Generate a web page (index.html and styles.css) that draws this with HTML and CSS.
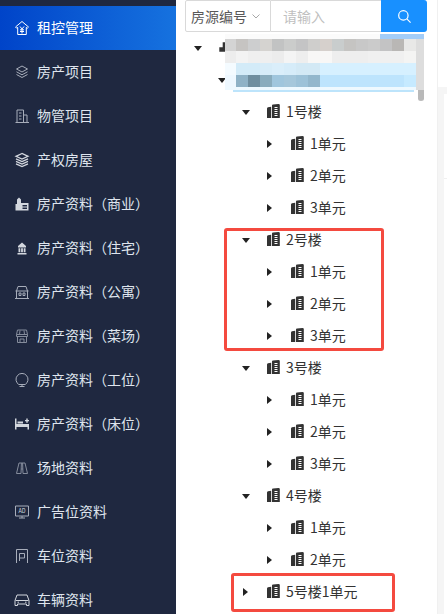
FILE: index.html
```html
<!DOCTYPE html>
<html>
<head>
    <title>租控管理</title>
    <link rel="stylesheet" href="styles.css">
</head>
<body>
    <svg class="sprite" width="0" height="0">
        <symbol id="bld" viewBox="0 0 13 14">
            <path d="M0 4.500Q0 3.500 1 3.300L4.200 2.700V14H0zM5 1.500Q5 .8 6 .600L11.500 0Q12.800 0 12.800 1V14H5zM7.500 3v.9h3V3zM7.500 5v.9h3V5zM7.500 7v.9h3V7zM7.500 9v.9h3V9zM7.500 11v.9h3v-.9z" fill-rule="evenodd"/>
        </symbol>
        <symbol id="org" viewBox="0 0 13 14">
            <path d="M3.700 2.300H6v5H3.700zM.3 7.300H6v4.400H.3z"/>
        </symbol>
    </svg>

    <div class="sidebar">
        <div class="menu-item active">
            <svg class="menu-icon" viewBox="0 0 16 16"><path d="M8 1.500 1.500 7l1.200 1.200 1-.8V14.500h8.600V7.400l1 .8L14.500 7zM6 6.500 8 9l2-2.500M8 9v4.500M6 9.800h4M6 11.500h4"/></svg>
            <span>租控管理</span>
        </div>
        <div class="menu-item">
            <svg class="menu-icon" viewBox="0 0 16 16"><path d="M8 2 2.500 5 8 8l5.500-3zM2.500 7.800 8 10.800l5.500-3M2.500 10.500 8 13.500l5.500-3"/></svg>
            <span>房产项目</span>
        </div>
        <div class="menu-item">
            <svg class="menu-icon" viewBox="0 0 16 16"><path d="M3 14.500V2h6.500v12.500M9.500 7H13v7.500M1.500 14.500h13.500M5 5h2.500M5 8h2.500M5 11h2.500"/></svg>
            <span>物管项目</span>
        </div>
        <div class="menu-item">
            <svg class="menu-icon thick" viewBox="0 0 16 16"><path d="M8 1.500 2 4.300l6 2.800 6-2.800zM2 6.800l6 2.800 6-2.800M2 9.300l6 2.800 6-2.800M2 11.800l6 2.800 6-2.800"/></svg>
            <span>产权房屋</span>
        </div>
        <div class="menu-item">
            <svg class="menu-icon solid" viewBox="0 0 16 16"><path d="M3 8V3.500L5 1.500l2 2V7h7.500v7.500H1.500V8zM8.500 9v1.500h4.500V9zM8.500 11.500V13h4.500v-1.500z" fill-rule="evenodd"/></svg>
            <span>房产资料（商业）</span>
        </div>
        <div class="menu-item">
            <svg class="menu-icon solid" viewBox="0 0 16 16"><path d="M8 2.500 12 6v1.500H4V6zM4.500 8.300h1.800v4H4.500zM7.100 8.300h1.800v4H7.100zM9.700 8.300h1.800v4H9.700zM3.500 13h9v1.500h-9z"/></svg>
            <span>房产资料（住宅）</span>
        </div>
        <div class="menu-item">
            <svg class="menu-icon" viewBox="0 0 16 16"><path d="M2.500 7 4 2.500h8L13.500 7M1.500 7h13M2.500 7v7.500h11V7M5 9h2v2.500H5zM9 9h2v2.500H9zM1 14.500h14"/></svg>
            <span>房产资料（公寓）</span>
        </div>
        <div class="menu-item">
            <svg class="menu-icon dim" viewBox="0 0 16 16"><path d="M3.500 2h9l1 4.500h-11zM2.500 6.500v2h11v-2M3.500 8.500v6h9v-6M6 14.500V11h4v3.500M6 2.500l-.5 4M10 2.500l.5 4"/></svg>
            <span>房产资料（菜场）</span>
        </div>
        <div class="menu-item">
            <svg class="menu-icon" viewBox="0 0 16 16"><path d="M4.800 12.500A6 6 0 1 1 11.200 12.500zM8 12.500v2M5.500 14.500h5"/></svg>
            <span>房产资料（工位）</span>
        </div>
        <div class="menu-item">
            <svg class="menu-icon solid" viewBox="0 0 16 16"><path d="M1 2.500h1.500V8H15v5.500h-1.500V11h-11v2.500H1zM3.500 5.500H9V7.500H3.500zM11 4h1.300V2.500h1.400V4H15v1.300h-1.300v1.400h-1.400V5.300H11z"/></svg>
            <span>房产资料（床位）</span>
        </div>
        <div class="menu-item">
            <svg class="menu-icon dim" viewBox="0 0 16 16"><path d="M5 3h6l2.500 10.500H9L8.800 9H7.200L7 13.500H2.500zM7.400 3 7.200 9M8.600 3l.2 6"/></svg>
            <span>场地资料</span>
        </div>
        <div class="menu-item">
            <svg class="menu-icon" viewBox="0 0 16 16"><path d="M1.500 2h13v10h-13zM5 14h6M8 12v2"/><text x="8" y="9.300" class="ad-text">AD</text></svg>
            <span>广告位资料</span>
        </div>
        <div class="menu-item">
            <svg class="menu-icon" viewBox="0 0 16 16"><path d="M2.500 15V1.500h11V15M5.500 13V5.500h5v4.500h-5"/></svg>
            <span>车位资料</span>
        </div>
        <div class="menu-item">
            <svg class="menu-icon bright" viewBox="0 0 16 16"><path d="M1 8.500 3 3h10l2 5.500v5h-2.500V12h-9v1.500H1zM1.500 8.500h13M3.500 10.200h1.500M11 10.200h1.500"/></svg>
            <span>车辆资料</span>
        </div>
    </div>

    <div class="content">
        <div class="search-bar">
            <div class="search-select">
                <span>房源编号</span>
                <svg class="chevron" viewBox="0 0 8 5"><path d="M.5.500 4 4 7.500.500"/></svg>
            </div>
            <div class="search-input">请输入</div>
            <div class="search-btn">
                <svg viewBox="0 0 16 16"><circle cx="6.800" cy="6.800" r="5"/><path d="m10.500 10.500 4 4"/></svg>
            </div>
        </div>

        <div class="tree">
            <div class="node"><i class="switch open"></i><svg class="bld"><use href="#org"/></svg></div>
            <div class="node l1"><i class="switch open"></i></div>
            <div class="node l2"><i class="switch open"></i><svg class="bld"><use href="#bld"/></svg><span>1号楼</span></div>
            <div class="node l3"><i class="switch"></i><svg class="bld"><use href="#bld"/></svg><span>1单元</span></div>
            <div class="node l3"><i class="switch"></i><svg class="bld"><use href="#bld"/></svg><span>2单元</span></div>
            <div class="node l3"><i class="switch"></i><svg class="bld"><use href="#bld"/></svg><span>3单元</span></div>
            <div class="node l2"><i class="switch open"></i><svg class="bld"><use href="#bld"/></svg><span>2号楼</span></div>
            <div class="node l3"><i class="switch"></i><svg class="bld"><use href="#bld"/></svg><span>1单元</span></div>
            <div class="node l3"><i class="switch"></i><svg class="bld"><use href="#bld"/></svg><span>2单元</span></div>
            <div class="node l3"><i class="switch"></i><svg class="bld"><use href="#bld"/></svg><span>3单元</span></div>
            <div class="node l2"><i class="switch open"></i><svg class="bld"><use href="#bld"/></svg><span>3号楼</span></div>
            <div class="node l3"><i class="switch"></i><svg class="bld"><use href="#bld"/></svg><span>1单元</span></div>
            <div class="node l3"><i class="switch"></i><svg class="bld"><use href="#bld"/></svg><span>2单元</span></div>
            <div class="node l3"><i class="switch"></i><svg class="bld"><use href="#bld"/></svg><span>3单元</span></div>
            <div class="node l2"><i class="switch open"></i><svg class="bld"><use href="#bld"/></svg><span>4号楼</span></div>
            <div class="node l3"><i class="switch"></i><svg class="bld"><use href="#bld"/></svg><span>1单元</span></div>
            <div class="node l3"><i class="switch"></i><svg class="bld"><use href="#bld"/></svg><span>2单元</span></div>
            <div class="node l2"><i class="switch"></i><svg class="bld"><use href="#bld"/></svg><span>5号楼1单元</span></div>

            <!-- blurred out project names -->
            <svg class="mosaic" width="199" height="67" viewBox="0 0 199 67" shape-rendering="crispEdges">
                <rect x="0" y="0" width="191" height="5" fill="#fbfbfb"/>
                <rect x="155" y="0" width="44" height="5" fill="#a3cdf8"/>
                <g>
                    <rect x="0" y="5" width="11" height="12" fill="#d4d4d4"/>
                    <rect x="11" y="5" width="12" height="12" fill="#c6c4c2"/>
                    <rect x="23" y="5" width="12" height="12" fill="#cdcecf"/>
                    <rect x="35" y="5" width="12" height="12" fill="#d5d3d0"/>
                    <rect x="47" y="5" width="12" height="12" fill="#c2c3c3"/>
                    <rect x="59" y="5" width="12" height="12" fill="#cbcccb"/>
                    <rect x="71" y="5" width="12" height="12" fill="#c4c4c5"/>
                    <rect x="83" y="5" width="12" height="12" fill="#cfcecc"/>
                    <rect x="95" y="5" width="12" height="12" fill="#d6d0cc"/>
                    <rect x="107" y="5" width="12" height="12" fill="#c9cdcd"/>
                    <rect x="119" y="5" width="12" height="12" fill="#c5c4c2"/>
                    <rect x="131" y="5" width="12" height="12" fill="#c8c8c8"/>
                    <rect x="143" y="5" width="12" height="12" fill="#cbcbcb"/>
                    <rect x="155" y="5" width="12" height="12" fill="#c3c3c4"/>
                    <rect x="167" y="5" width="12" height="12" fill="#b9b7b5"/>
                    <rect x="179" y="5" width="12" height="12" fill="#e8e8e7"/>
                </g>
                <g>
                    <rect x="0" y="17" width="11" height="12" fill="#ededed"/>
                    <rect x="11" y="17" width="12" height="12" fill="#f3f3f3"/>
                    <rect x="23" y="17" width="24" height="12" fill="#efefef"/>
                    <rect x="47" y="17" width="12" height="12" fill="#ececec"/>
                    <rect x="59" y="17" width="12" height="12" fill="#f4f4f4"/>
                    <rect x="71" y="17" width="12" height="12" fill="#eeeeee"/>
                    <rect x="83" y="17" width="24" height="12" fill="#f8f7f6"/>
                    <rect x="107" y="17" width="36" height="12" fill="#eeeeee"/>
                    <rect x="143" y="17" width="36" height="12" fill="#f0f0f0"/>
                    <rect x="179" y="17" width="12" height="12" fill="#f4f4f3"/>
                </g>
                <g>
                    <rect x="0" y="29" width="11" height="12" fill="#f4fbff"/>
                    <rect x="11" y="29" width="24" height="12" fill="#d3ebf8"/>
                    <rect x="35" y="29" width="12" height="12" fill="#d7ecf8"/>
                    <rect x="47" y="29" width="12" height="12" fill="#daeefa"/>
                    <rect x="59" y="29" width="12" height="12" fill="#d6ecf9"/>
                    <rect x="71" y="29" width="24" height="12" fill="#d3e9f5"/>
                    <rect x="95" y="29" width="96" height="12" fill="#d6f0ff"/>
                </g>
                <g>
                    <rect x="0" y="41" width="11" height="12" fill="#eef8ff"/>
                    <rect x="11" y="41" width="12" height="12" fill="#8fb2c6"/>
                    <rect x="23" y="41" width="12" height="12" fill="#6f8e9f"/>
                    <rect x="35" y="41" width="12" height="12" fill="#8aacbd"/>
                    <rect x="47" y="41" width="12" height="12" fill="#a0c6dd"/>
                    <rect x="59" y="41" width="12" height="12" fill="#a5c7db"/>
                    <rect x="71" y="41" width="12" height="12" fill="#9dc2d8"/>
                    <rect x="83" y="41" width="12" height="12" fill="#93b7cc"/>
                    <rect x="95" y="41" width="84" height="12" fill="#bde4fd"/>
                    <rect x="179" y="41" width="12" height="12" fill="#c6eaff"/>
                </g>
                <rect x="0" y="53" width="191" height="3" fill="#eef9ff"/>
                <rect x="8" y="56" width="181" height="2" fill="#bde4fb"/>
                <rect x="191" y="5" width="8" height="51" fill="#dddddd"/>
                <path d="M193 56h6v8.500a3 2.500 0 0 1-6 0z" fill="#b9b9b9" shape-rendering="auto"/>
            </svg>

            <div class="mark mark-floor"></div>
            <div class="mark mark-unit"></div>
        </div>
    </div>

    <div class="side-panel">
        <div class="panel-grey">
            <div class="panel-card"><div class="panel-row"></div></div>
        </div>
    </div>
</body>
</html>
```

FILE: styles.css
```css
body {
    margin: 0;
    height: 614px;
    overflow: hidden;
    display: flex;
    background: #fff;
    font-family: "Noto Sans CJK SC", sans-serif;
    font-size: 14px;
}
.sprite { position: absolute; }

.sidebar {
    width: 176px;
    flex: none;
    padding-top: 6px;
    box-sizing: border-box;
    background: #1f2840;
    overflow: hidden;
}
.menu-item {
    height: 44px;
    display: flex;
    align-items: center;
    gap: 7px;
    padding-left: 14px;
    color: #dfe5ee;
}
.menu-item span { margin-bottom: 2px; }
.menu-item.active {
    background: linear-gradient(90deg, #0044c9, #1672df);
    color: #fff;
}
.menu-icon {
    width: 16px;
    height: 16px;
    fill: none;
    stroke: #a7adba;
    stroke-width: 1;
}
.menu-icon.dim { stroke: #858c9c; }
.menu-icon.bright { stroke: #d3d7de; }
.menu-icon.thick { stroke: #d3d7de; stroke-width: 1.300; }
.menu-icon.solid { fill: #d3d7de; stroke: none; }
.active .menu-icon { stroke: #fff; }
.ad-text {
    font-size: 5.500px;
    text-anchor: middle;
    fill: #d3d7de;
    stroke: none;
}

.content {
    width: 261px;
    flex: none;
    padding-left: 9px;
    box-sizing: border-box;
}
.search-bar {
    display: flex;
    width: 242px;
    height: 32px;
    box-sizing: border-box;
    color: #595959;
}
.search-select {
    width: 86px;
    display: flex;
    align-items: center;
    gap: 5px;
    padding-left: 5px;
    box-sizing: border-box;
    border: 1px solid #d9d9d9;
    border-radius: 2px 0 0 2px;
}
.chevron {
    width: 8px;
    height: 5px;
    fill: none;
    stroke: #a8a8a8;
}
.search-input {
    width: 111px;
    display: flex;
    align-items: center;
    padding-left: 12px;
    box-sizing: border-box;
    border: 1px solid #d9d9d9;
    border-left: none;
    color: #bfbfbf;
}
.search-btn {
    width: 46px;
    margin-left: -1px;
    margin-right: -1px;
    background: #1890ff;
    border-radius: 0 3px 3px 0;
    display: flex;
    align-items: center;
    justify-content: center;
}
.search-btn svg {
    width: 15px;
    height: 15px;
    fill: none;
    stroke: #fff;
    stroke-width: 1.300;
}

.tree { position: relative; color: #333; }
.node {
    height: 32px;
    display: flex;
    align-items: center;
}
.node span { margin-bottom: 2px; }
.node.l1 { padding-left: 24px; }
.node.l2 { padding-left: 48px; }
.node.l3 { padding-left: 72px; }
.switch {
    width: 24px;
    height: 32px;
    flex: none;
    position: relative;
    margin-right: 10px;
}
.switch::after {
    content: "";
    position: absolute;
    left: 10px;
    top: 12px;
    border-style: solid;
    border-width: 4px 0 4px 5.500px;
    border-color: transparent transparent transparent #222;
}
.switch.open::after {
    left: 8.500px;
    top: 14px;
    border-width: 5px 4px 0 4px;
    border-color: #222 transparent transparent transparent;
}
.bld {
    width: 13px;
    height: 14px;
    flex: none;
    margin-right: 6px;
    margin-bottom: 2px;
    fill: #333;
}

.mosaic {
    position: absolute;
    left: 40px;
    top: 2px;
}
.mark {
    position: absolute;
    box-sizing: border-box;
    border: 3px solid #f44a3f;
    border-radius: 3px;
}
.mark-floor { left: 39px; top: 196px; width: 160px; height: 123px; }
.mark-unit { left: 46px; top: 541px; width: 164px; height: 39px; }

.side-panel {
    flex: 1;
    padding-top: 87px;
    border-left: 1px solid #f0f0f0;
}
.panel-grey {
    height: 100%;
    padding: 7px 0 0 6px;
    box-sizing: border-box;
    background: #f5f5f5;
}
.panel-card {
    height: 100%;
    padding-top: 84px;
    box-sizing: border-box;
    background: #fff;
}
.panel-row { border-top: 1px solid #f0f0f0; }
```
